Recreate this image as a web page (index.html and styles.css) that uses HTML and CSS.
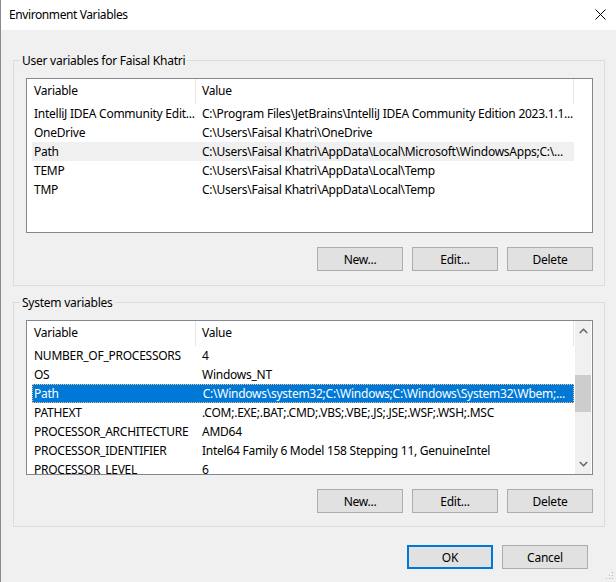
FILE: index.html
```html
<!DOCTYPE html>
<html lang="en">

<head>
    <meta charset="UTF-8">
    <title>Environment Variables</title>
    <link rel="stylesheet" href="styles.css">
</head>

<body>
    <div class="window">
        <div class="titlebar">
            <span class="title">Environment Variables</span>
            <svg class="close" width="11" height="11" viewBox="0 0 11 11">
                <path d="M0.5 0.5 L10.5 10.5 M10.5 0.5 L0.5 10.5" stroke="#000" stroke-width="1" fill="none" />
            </svg>
        </div>

        <fieldset class="group group-user">
            <legend>User variables for Faisal Khatri</legend>
            <div class="list list-user">
                <div class="rows">
                    <div class="row head"><span class="col name">Variable</span><span class="col value">Value</span></div>
                    <div class="row"><span class="col name">IntelliJ IDEA Community Edit...</span><span class="col value">C:\Program Files\JetBrains\IntelliJ IDEA Community Edition 2023.1.1...</span></div>
                    <div class="row"><span class="col name">OneDrive</span><span class="col value">C:\Users\Faisal Khatri\OneDrive</span></div>
                    <div class="row hover"><span class="col name">Path</span><span class="col value">C:\Users\Faisal Khatri\AppData\Local\Microsoft\WindowsApps;C:\...</span></div>
                    <div class="row"><span class="col name">TEMP</span><span class="col value">C:\Users\Faisal Khatri\AppData\Local\Temp</span></div>
                    <div class="row"><span class="col name">TMP</span><span class="col value">C:\Users\Faisal Khatri\AppData\Local\Temp</span></div>
                </div>
            </div>
            <div class="buttons">
                <button>New...</button>
                <button>Edit...</button>
                <button>Delete</button>
            </div>
        </fieldset>

        <fieldset class="group group-system">
            <legend>System variables</legend>
            <div class="list list-system">
                <div class="rows">
                    <div class="row head"><span class="col name">Variable</span><span class="col value">Value</span></div>
                    <div class="row"><span class="col name">NUMBER_OF_PROCESSORS</span><span class="col value">4</span></div>
                    <div class="row"><span class="col name">OS</span><span class="col value">Windows_NT</span></div>
                    <div class="row selected"><span class="col name">Path</span><span class="col value">C:\Windows\system32;C:\Windows;C:\Windows\System32\Wbem;...</span></div>
                    <div class="row"><span class="col name">PATHEXT</span><span class="col value">.COM;.EXE;.BAT;.CMD;.VBS;.VBE;.JS;.JSE;.WSF;.WSH;.MSC</span></div>
                    <div class="row"><span class="col name">PROCESSOR_ARCHITECTURE</span><span class="col value">AMD64</span></div>
                    <div class="row"><span class="col name">PROCESSOR_IDENTIFIER</span><span class="col value">Intel64 Family 6 Model 158 Stepping 11, GenuineIntel</span></div>
                    <div class="row"><span class="col name">PROCESSOR_LEVEL</span><span class="col value">6</span></div>
                </div>
                <div class="scrollbar">
                    <svg class="arrow" width="9" height="6" viewBox="0 0 9 6">
                        <path d="M0.8 5 L4.5 1.3 L8.2 5" stroke="#606060" stroke-width="1.4" fill="none" />
                    </svg>
                    <div class="track">
                        <div class="thumb"></div>
                    </div>
                    <svg class="arrow" width="9" height="6" viewBox="0 0 9 6">
                        <path d="M0.8 1 L4.5 4.7 L8.2 1" stroke="#606060" stroke-width="1.4" fill="none" />
                    </svg>
                </div>
            </div>
            <div class="buttons">
                <button>New...</button>
                <button>Edit...</button>
                <button>Delete</button>
            </div>
        </fieldset>

        <div class="actions">
            <button class="ok">OK</button>
            <button>Cancel</button>
        </div>

        <svg class="grip" width="10" height="10" viewBox="0 0 10 10">
            <rect x="8" y="2" width="1" height="1" fill="#b4b4b4" />
            <rect x="5" y="5" width="1" height="1" fill="#b4b4b4" />
            <rect x="8" y="5" width="1" height="1" fill="#b4b4b4" />
            <rect x="2" y="8" width="1" height="1" fill="#b4b4b4" />
            <rect x="5" y="8" width="1" height="1" fill="#b4b4b4" />
            <rect x="8" y="8" width="1" height="1" fill="#b4b4b4" />
        </svg>
    </div>
</body>

</html>
```

FILE: styles.css
```css
html,
body {
    margin: 0;
    height: 100%;
}

body {
    background-color: #f0f0f0;
    font-family: "Segoe UI", "Noto Sans", sans-serif;
    font-size: 12px;
    letter-spacing: -0.25px;
    color: #000;
}

.window {
    position: relative;
    box-sizing: border-box;
    width: 616px;
    height: 582px;
    border-left: 1px solid #8a8a8a;
    background-color: #f0f0f0;
}

.titlebar {
    display: flex;
    align-items: center;
    height: 30px;
    padding: 0 10px 0 8px;
    background-color: #fff;
}

.title {
    flex: 1;
    line-height: 16px;
    letter-spacing: -0.4px;
}

.close {
    display: block;
    margin-top: -1px;
}

.group {
    margin: 23px 11px 0 12px;
    padding: 10px 11px 14px 12px;
    border: 1px solid #dcdcdc;
    min-width: 0;
}

.group-system {
    margin-top: 9px;
    padding-bottom: 13px;
}

.group>legend {
    margin-left: -6px;
    padding: 0 2px;
    line-height: 15px;
}

.list {
    display: flex;
    box-sizing: border-box;
    height: 155px;
    border: 1px solid #828790;
    background-color: #fff;
    overflow: hidden;
}

.rows {
    padding-left: 5px;
}

.row {
    display: flex;
    width: 542px;
    height: 19px;
    line-height: 19px;
    white-space: nowrap;
}

.row.head {
    height: 25px;
    line-height: 23px;
}

.col {
    box-sizing: border-box;
    overflow: hidden;
    border-right: 1px solid transparent;
}

.col.name {
    width: 164px;
    padding-left: 2px;
}

.col.value {
    width: 378px;
    padding-left: 6px;
}

.row.head>.col {
    border-right-color: #e5e5e5;
}

.row.hover {
    background-color: #f0f0f0;
}

.row.selected {
    box-sizing: border-box;
    background-color: #0078d7;
    color: #fff;
    border: 1px dotted #f3c08a;
    line-height: 17px;
}

.row.selected>.col.name {
    padding-left: 1px;
}

.row.selected>.col.value {
    width: 377px;
}

.scrollbar {
    display: flex;
    flex-direction: column;
    align-items: center;
    width: 16px;
    margin: 0 1px 0 auto;
    background-color: #f0f0f0;
}

.scrollbar>.arrow {
    display: block;
    flex: none;
    margin: 7px 0;
}

.track {
    flex: 1;
    width: 100%;
    padding-top: 34px;
}

.thumb {
    width: 100%;
    height: 37px;
    background-color: #cdcdcd;
}

.buttons {
    display: flex;
    justify-content: flex-end;
    gap: 9px;
    margin-top: 14px;
}

button {
    box-sizing: border-box;
    width: 86px;
    height: 24px;
    padding: 0;
    border: 1px solid #adadad;
    background-color: #e1e1e1;
    font-family: inherit;
    font-size: 12px;
    letter-spacing: inherit;
    color: #000;
}

.actions {
    display: flex;
    justify-content: flex-end;
    gap: 9px;
    margin-top: 18px;
    padding-right: 28px;
}

button.ok {
    border: 2px solid #0078d7;
}

.grip {
    position: absolute;
    right: 2px;
    bottom: 2px;
}
```
